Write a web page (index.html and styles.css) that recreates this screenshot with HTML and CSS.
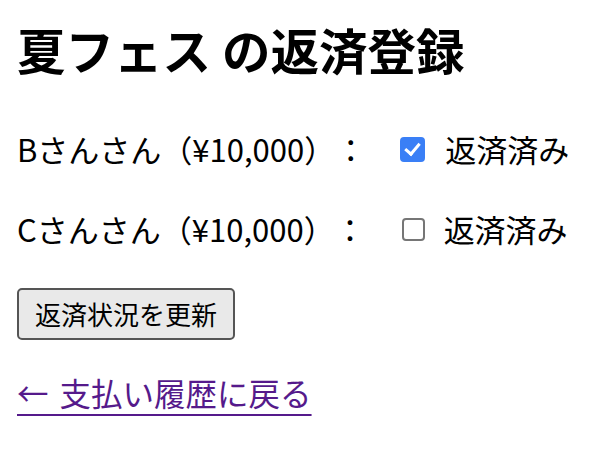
FILE: index.html
```html
<!DOCTYPE html>
<html lang="ja">
<head>
  <meta charset="UTF-8" />
  <meta name="viewport" content="width=device-width, initial-scale=1.0" />
  <title>夏フェス の返済登録</title>
  <link rel="stylesheet" href="styles.css">
</head>
<body>
  <h1>夏フェス の返済登録</h1>

  <form class="repay-form" onsubmit="return false;">
    <label class="row">
      <span class="who">Bさんさん（¥10,000）：</span>
      <input type="checkbox" name="paid_b" checked />
      <span>返済済み</span>
    </label>

    <label class="row">
      <span class="who">Cさんさん（¥10,000）：</span>
      <input type="checkbox" name="paid_c" />
      <span>返済済み</span>
    </label>

    <button type="submit" class="btn">返済状況を更新</button>
  </form>

  <a class="back" href="#">← 支払い履歴に戻る</a>
</body>
</html>
```

FILE: styles.css
```css
body {
  font-family: "Noto Sans CJK JP", "Noto Sans", sans-serif;
  font-size: 31px;
  color: #000;
  background: #fff;
  margin: 0;
  padding: 14px 17px;
  text-spacing-trim: space-all;
}
h1 {
  font-size: 48.5px;
  line-height: 70px;
  margin: 0 0 43px;
  font-weight: bold;
}
.repay-form {
  display: flex;
  flex-direction: column;
  align-items: flex-start;
}
.row {
  display: flex;
  align-items: center;
  line-height: 44px;
  margin-bottom: 36px;
}
.row input {
  appearance: none;
  box-sizing: border-box;
  position: relative;
  width: 23px;
  height: 23px;
  margin: 0 19px 0 36px;
  border: 2px solid #767676;
  border-radius: 4px;
  background: #fff;
}
.row input:checked {
  width: 25px;
  height: 25px;
  margin: 0 20px 0 34px;
  background: #3a7ff6;
  border-color: #3a7ff6;
}
.row input:checked::after {
  content: "";
  position: absolute;
  left: 6px;
  top: 1px;
  width: 6px;
  height: 12px;
  border: solid #fff;
  border-width: 0 3.5px 3.5px 0;
  transform: rotate(40deg);
}
.btn {
  font-family: inherit;
  font-size: 26px;
  line-height: 38px;
  padding: 5px 16px;
  background: #e9e9e9;
  color: #000;
  border: 2px solid #555;
  border-radius: 5px;
  margin-top: 1px;
}
.back {
  display: inline-block;
  margin-top: 30px;
  line-height: 44px;
  font-size: 31.5px;
  word-spacing: 4px;
  color: #551a8b;
  text-decoration-thickness: 2px;
  text-underline-offset: 8px;
}
```
